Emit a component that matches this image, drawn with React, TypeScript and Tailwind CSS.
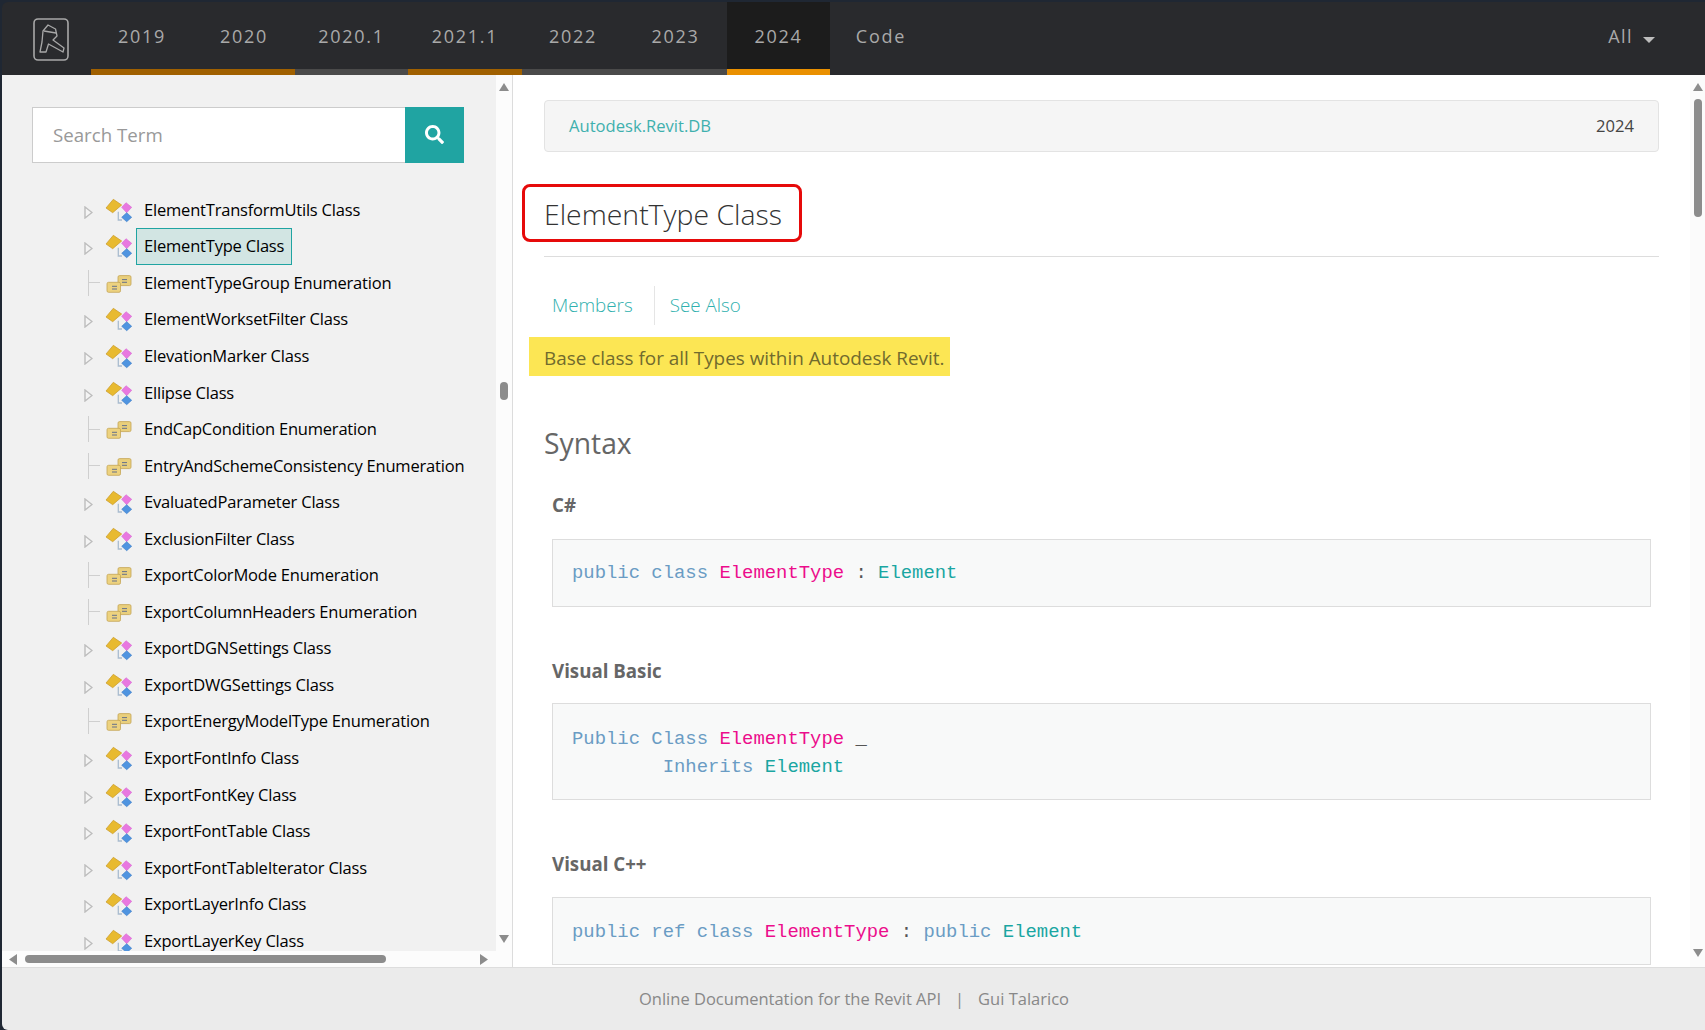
import React from "react";
import { FaSearch } from "react-icons/fa";

const tabs = [
  { label: "2019", w: "w-[102px]", bar: "bg-[#a06000]" },
  { label: "2020", w: "w-[102px]", bar: "bg-[#a06000]" },
  { label: "2020.1", w: "w-[113px]", bar: "bg-[#4a4a4a]" },
  { label: "2021.1", w: "w-[114px]", bar: "bg-[#a06000]" },
  { label: "2022", w: "w-[102px]", bar: "bg-[#4a4a4a]" },
  { label: "2023", w: "w-[103px]", bar: "bg-[#4a4a4a]" },
  { label: "2024", w: "w-[103px]", bar: "bg-[#ea9000]", active: true },
  { label: "Code", w: "w-[102px]", bar: "bg-transparent" },
];

const rows: [string, "class" | "enum"][] = [
  ["ElementTransformUtils Class", "class"],
  ["ElementType Class", "class"],
  ["ElementTypeGroup Enumeration", "enum"],
  ["ElementWorksetFilter Class", "class"],
  ["ElevationMarker Class", "class"],
  ["Ellipse Class", "class"],
  ["EndCapCondition Enumeration", "enum"],
  ["EntryAndSchemeConsistency Enumeration", "enum"],
  ["EvaluatedParameter Class", "class"],
  ["ExclusionFilter Class", "class"],
  ["ExportColorMode Enumeration", "enum"],
  ["ExportColumnHeaders Enumeration", "enum"],
  ["ExportDGNSettings Class", "class"],
  ["ExportDWGSettings Class", "class"],
  ["ExportEnergyModelType Enumeration", "enum"],
  ["ExportFontInfo Class", "class"],
  ["ExportFontKey Class", "class"],
  ["ExportFontTable Class", "class"],
  ["ExportFontTableIterator Class", "class"],
  ["ExportLayerInfo Class", "class"],
  ["ExportLayerKey Class", "class"],
];

const Logo = () => (
  <svg width="36" height="44" viewBox="0 0 36 44" fill="none" stroke="#a8a8a8" strokeWidth="1.3">
    <rect x="1" y="1" width="34" height="41" rx="4" strokeWidth="1.6" />
    <path d="M15 7 L22.5 11 L24 18 L20 22 L31 30 L30 34 L15.5 26 L13 34 L7 34 L9 24 L10 13 Z" strokeLinejoin="round" />
    <path d="M11 13 L23 15" />
  </svg>
);

const ClassIcon = () => (
  <svg width="28" height="26" viewBox="0 0 28 26" className="shrink-0">
    <path d="M13.3 14.7 V23 H17" fill="none" stroke="#a9bccf" strokeWidth="1.3" />
    <path d="M1 11 L8.3 2.3 L16.7 8 L7.7 15.7 Z" fill="#e8ba30" stroke="#c9992a" strokeWidth="0.7" />
    <path d="M16.7 10.3 L21 5.7 L26.7 10.3 L21.7 15.7 Z" fill="#e878e0" stroke="#d964d2" strokeWidth="0.6" />
    <path d="M16.7 20.3 L21.7 15.7 L26.7 20.3 L21.7 24.7 Z" fill="#4f94e0" stroke="#3d7cc6" strokeWidth="0.6" />
  </svg>
);

const EnumIcon = () => (
  <svg width="26" height="20" viewBox="0 0 26 20" className="shrink-0">
    <rect x="12" y="2.6" width="13" height="10" rx="1.5" fill="#e9cf7c" stroke="#c4a455" strokeWidth="0.8" />
    <path d="M16 6.6 H21 M16 9.3 H21" stroke="#66718a" strokeWidth="1" />
    <rect x="1" y="9.3" width="13.5" height="10" rx="1.5" fill="#edd27f" stroke="#c4a455" strokeWidth="0.8" />
    <path d="M6 13.3 H11 M6 16 H11" stroke="#66718a" strokeWidth="1" />
  </svg>
);

const Arrow = ({ dir }: { dir: "up" | "down" | "left" | "right" }) => {
  const points = {
    up: "5,0 10,8 0,8",
    down: "0,0 10,0 5,8",
    left: "8,0 8,11 0,5.5",
    right: "0,0 8,5.5 0,11",
  }[dir];
  const vertical = dir === "up" || dir === "down";
  return (
    <svg width={vertical ? 10 : 8} height={vertical ? 8 : 11} className="shrink-0">
      <polygon points={points} fill="#8c8c8c" />
    </svg>
  );
};

const TreeRow = ({ label, kind }: { label: string; kind: "class" | "enum" }) => {
  const selected = label === "ElementType Class";
  return (
    <div className="flex h-[36.55px] shrink-0 items-center whitespace-nowrap leading-[18px]">
      <div className="flex w-[50px] justify-center pl-[16px]">
        {kind === "class" ? (
          <svg width="9" height="13" viewBox="0 0 9 13" className="mt-[5px]">
            <polygon points="1,1 8,6.5 1,12" fill="#f4f4f4" stroke="#bdbdbd" strokeWidth="1.4" />
          </svg>
        ) : (
          <div className="ml-[12px] flex h-[26px] w-[12px] items-center border-l border-[#cfcfcf]">
            <div className="h-px w-[11px] bg-[#cfcfcf]" />
          </div>
        )}
      </div>
      <div className="flex w-[28px] justify-center">
        {kind === "class" ? <ClassIcon /> : <EnumIcon />}
      </div>
      <div
        className={
          selected
            ? "ml-[3px] flex h-[37px] items-center border border-[#20a4a2] bg-[#d2e5e3] px-[7px] text-black"
            : "ml-[3px] flex h-[37px] items-center border border-transparent px-[7px] text-black"
        }
      >
        {label}
      </div>
    </div>
  );
};

const Kw = ({ children }: { children: React.ReactNode }) => <span className="text-[#6a9cc4]">{children}</span>;
const Name = ({ children }: { children: React.ReactNode }) => <span className="text-[#ec0d8c]">{children}</span>;
const Base = ({ children }: { children: React.ReactNode }) => <span className="text-[#1aa6a2]">{children}</span>;

const CodeBox = ({ className, children }: { className: string; children: React.ReactNode }) => (
  <pre
    className={`ml-[8px] mr-[8px] border border-[#dddddd] bg-[#f8f9f9] px-[19px] font-['Liberation_Mono',monospace] text-[18.9px] leading-[28px] text-[#555] ${className}`}
  >
    {children}
  </pre>
);

export default function App() {
  return (
    <div className="flex h-[1030px] w-[1705px] flex-col overflow-hidden bg-[#1f2733] pl-[2px] pt-[2px] font-['Open_Sans',sans-serif]">
      <div className="flex h-[73px] shrink-0 rounded-tl-[6px] bg-[#292a2d]">
        <div className="flex w-[89px] items-start pl-[31px] pt-[16px]">
          <Logo />
        </div>
        {tabs.map((t) => (
          <div key={t.label} className={`flex ${t.w} flex-col ${t.active ? "bg-[#1c1c1c]" : ""}`}>
            <div className="flex flex-1 items-center justify-center pt-[1px] text-[18px] tracking-[1.75px] text-[#a9a9a9]">
              {t.label}
            </div>
            <div className={`h-[6px] ${t.bar}`} />
          </div>
        ))}
        <div className="flex flex-1 items-start justify-end pr-[50px] pt-[21px] text-[18px] tracking-[1.4px] text-[#a9a9a9]">
          <span>All</span>
          <svg width="12" height="6" className="ml-[10px] mt-[14px]">
            <polygon points="0,0 12,0 6,6" fill="#bdbdbd" />
          </svg>
        </div>
      </div>

      <div className="flex min-h-0 flex-1 bg-white">
        <div className="flex w-[511px] shrink-0 flex-col border-r border-[#dcdcdc]">
          <div className="flex min-h-0 flex-1">
            <div className="min-w-0 flex-1 overflow-hidden bg-[#f1f1f1] pt-[32px]">
              <div className="ml-[30px] flex h-[56px] w-[432px]">
                <div className="flex flex-1 items-center border border-r-0 border-[#cccccc] bg-white pl-[20px] text-[18.7px] text-[#999999]">
                  Search Term
                </div>
                <div className="flex w-[59px] items-center justify-center bg-[#20a4a2] pb-[2px]">
                  <FaSearch size={19} color="white" />
                </div>
              </div>
              <div className="mt-[28.5px] flex flex-col pl-[53px] text-[16.5px] tracking-[-0.2px]">
                {rows.map(([label, kind]) => (
                  <TreeRow key={label} label={label} kind={kind} />
                ))}
              </div>
            </div>
            <div className="flex w-[16px] shrink-0 flex-col items-center bg-[#fcfcfc] pb-[8px] pt-[8px]">
              <Arrow dir="up" />
              <div className="mt-[291px] h-[18px] w-[8px] rounded-full bg-[#8c8c8c]" />
              <div className="flex-1" />
              <Arrow dir="down" />
            </div>
          </div>
          <div className="flex h-[16px] shrink-0 items-center bg-[#fcfcfc] pl-[7px] pr-[24px]">
            <Arrow dir="left" />
            <div className="ml-[8px] h-[8px] w-[361px] rounded-full bg-[#8c8c8c]" />
            <div className="flex-1" />
            <Arrow dir="right" />
          </div>
        </div>

        <div className="relative min-w-0 flex-1 overflow-hidden pl-[31px] pr-[31px] pt-[25px]">
          <div className="flex h-[52px] items-center justify-between rounded-[4px] border border-[#e3e3e3] bg-[#f5f5f5] pl-[24px] pr-[24px] pt-[1px] text-[16.6px]">
            <span className="text-[#3fb0ae]">Autodesk.Revit.DB</span>
            <span className="text-[#444]">2024</span>
          </div>
          <h1 className="mt-[42px] text-[28.4px] font-light leading-[40px] text-[#333]">ElementType Class</h1>
          <div className="absolute left-[9px] top-[109px] h-[58px] w-[280px] rounded-[8px] border-[3px] border-[#e60a0a]" />
          <div className="mt-[22px] h-px bg-[#dddddd]" />
          <div className="mt-[29px] flex h-[39px] items-center text-[18.8px] font-light text-[#2fb0ae]">
            <span className="pl-[8px] pr-[21px]">Members</span>
            <span className="border-l border-[#e5e5e5] pl-[15px] leading-[39px]">See Also</span>
          </div>
          <div className="-ml-[15px] mt-[12px] h-[39px] w-[421px] whitespace-nowrap bg-[#fce654] pl-[15px] pt-[2px] text-[18.9px] leading-[39px] text-[#716b2e]">
            Base class for all Types within Autodesk Revit.
          </div>
          <h2 className="mt-[46px] text-[28.3px] leading-[42px] text-[#666666]">Syntax</h2>
          <h3 className="ml-[8px] mt-[27px] text-[18.7px] font-bold leading-[28px] text-[#666666]">C#</h3>
          <CodeBox className="mt-[20px] h-[68px] py-[19px]">
            <Kw>public class </Kw>
            <Name>ElementType</Name>
            <span> : </span>
            <Base>Element</Base>
          </CodeBox>
          <h3 className="ml-[8px] mt-[50px] text-[18.7px] font-bold leading-[28px] text-[#666666]">Visual Basic</h3>
          <CodeBox className="mt-[18px] h-[97px] py-[21px]">
            <Kw>Public Class </Kw>
            <Name>ElementType</Name>
            <span> _</span>
            {"\n"}
            <Kw>        Inherits </Kw>
            <Base>Element</Base>
          </CodeBox>
          <h3 className="ml-[8px] mt-[50px] text-[18.7px] font-bold leading-[28px] text-[#666666]">Visual C++</h3>
          <CodeBox className="mt-[19px] h-[68px] py-[20px]">
            <Kw>public ref class </Kw>
            <Name>ElementType</Name>
            <span> : </span>
            <Kw>public </Kw>
            <Base>Element</Base>
          </CodeBox>
        </div>

        <div className="flex w-[15px] shrink-0 flex-col items-center bg-[#fbfbfb] pb-[10px] pt-[8px]">
          <Arrow dir="up" />
          <div className="mt-[8px] h-[118px] w-[8px] rounded-full bg-[#8c8c8c]" />
          <div className="flex-1" />
          <Arrow dir="down" />
        </div>
      </div>

      <div className="flex h-[63px] shrink-0 items-center justify-center rounded-bl-[6px] border-t border-[#dddddd] bg-[#ebebeb] pl-[1px] text-[16.5px] text-[#888888]">
        <span>Online Documentation for the Revit API</span>
        <span className="mx-[14px]">|</span>
        <span>Gui Talarico</span>
      </div>
    </div>
  );
}
